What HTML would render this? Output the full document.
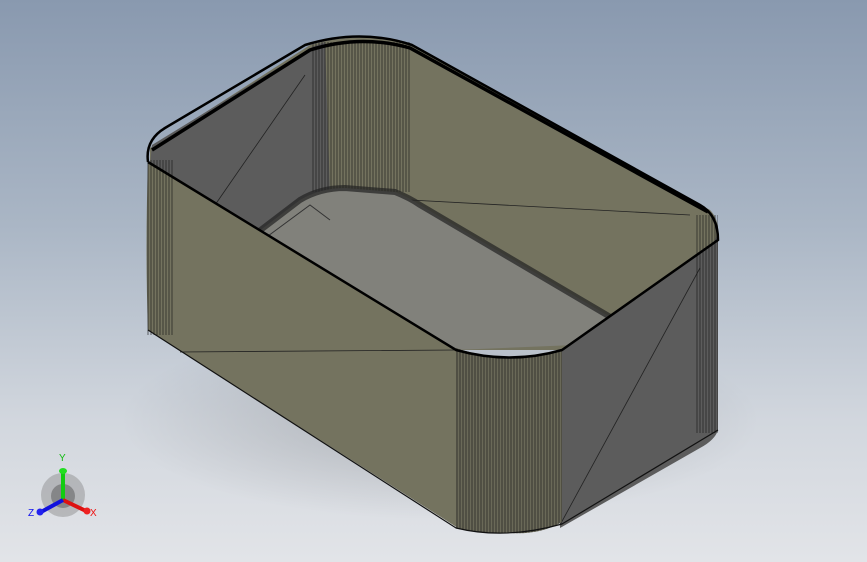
<!DOCTYPE html>
<html><head><style>
html,body{margin:0;padding:0;width:867px;height:562px;overflow:hidden}
body{background:linear-gradient(180deg,#8999af 0%,#aab6c5 40%,#d2d7de 75%,#e2e4e8 100%)}
svg{position:absolute;left:0;top:0}
</style></head><body>
<svg width="867" height="562" viewBox="0 0 867 562">
<defs>
<pattern id="vl" width="3" height="10" patternUnits="userSpaceOnUse">
<line x1="1" y1="0" x2="1" y2="10" stroke="#111" stroke-width="0.8" opacity="0.75"/>
</pattern>
<radialGradient id="sh" cx="0.5" cy="0.5" r="0.5"><stop offset="0" stop-color="#000" stop-opacity="0.18"/><stop offset="1" stop-color="#000" stop-opacity="0"/></radialGradient>
</defs>
<ellipse cx="440" cy="420" rx="320" ry="100" fill="url(#sh)"/>
<path d="M150,148 L310,45 Q360,30 410,45 L710,210 Q720,220 718,240 L560,350 L460,350 L150,165 Z" fill="#74735f"/>
<path d="M152,145 L312,47 L325,42 L330,192 L300,205 L258,232 L150,165 Z" fill="#5c5c5c"/>
<line x1="215" y1="205" x2="305" y2="75" stroke="#222" stroke-width="0.8"/>
<rect x="312" y="42" width="98" height="150" fill="url(#vl)"/>
<line x1="410" y1="200" x2="690" y2="215" stroke="#222" stroke-width="0.8"/>
<path d="M258,232 L300,200 Q320,188 345,188 L395,192 Q410,198 420,205 L612,318 L575,345 L455,350 Z" fill="#81817b"/>
<path d="M258,232 L300,200 Q320,188 345,188 L395,192 Q410,198 420,205 L612,318" fill="none" stroke="#222" stroke-width="6" opacity="0.7"/>
<path d="M268,236 L310,205 L330,220" fill="none" stroke="#333" stroke-width="1"/>
<path d="M148,162 L458,350 L458,528 L148,330 Q145,250 148,162 Z" fill="#74735f"/>
<line x1="180" y1="352" x2="455" y2="350" stroke="#222" stroke-width="0.8"/>
<rect x="146" y="160" width="28" height="175" fill="url(#vl)"/>
<path d="M560,350 L700,254 Q718,242 718,230 L718,430 Q715,440 700,448 L560,528 Z" fill="#5c5c5c"/>
<line x1="560" y1="525" x2="700" y2="268" stroke="#222" stroke-width="0.8"/>
<rect x="696" y="215" width="22" height="218" fill="url(#vl)"/>
<path d="M456,348 Q505,365 562,350 L562,522 Q540,535 510,533 Q480,533 456,528 Z" fill="#6a6958"/>
<path d="M456,348 Q505,365 562,350 L562,522 Q540,535 510,533 Q480,533 456,528 Z" fill="url(#vl)"/>
<path d="M148,162 Q145,140 165,128 L305,45 Q360,28 412,45 L700,205 Q718,215 718,240 L562,350 Q510,365 456,350 L148,162" fill="none" stroke="#000" stroke-width="2.5"/>
<path d="M152,150 L310,50 Q360,34 410,48 L708,212" fill="none" stroke="#000" stroke-width="3.5"/>
<path d="M148,330 L456,528 Q505,540 562,524 L718,430" fill="none" stroke="#111" stroke-width="1.2"/>
<ellipse cx="63" cy="495" rx="22" ry="22" fill="#888" opacity="0.45"/>
<ellipse cx="63" cy="496" rx="12" ry="12" fill="#555" opacity="0.5"/>
<line x1="63" y1="500" x2="63" y2="472" stroke="#1c1" stroke-width="4"/>
<ellipse cx="63" cy="471" rx="4" ry="3" fill="#2d2"/>
<line x1="63" y1="500" x2="86" y2="511" stroke="#d11" stroke-width="4"/>
<circle cx="87" cy="511" r="3.5" fill="#e22"/>
<line x1="63" y1="500" x2="41" y2="512" stroke="#11d" stroke-width="4"/>
<circle cx="40" cy="512" r="3.5" fill="#22e"/>
<text x="59" y="461" font-family="Liberation Sans,sans-serif" font-size="10" fill="#1b1">Y</text>
<text x="90" y="516" font-family="Liberation Sans,sans-serif" font-size="10" fill="#e11">X</text>
<text x="28" y="516" font-family="Liberation Sans,sans-serif" font-size="10" fill="#11e">Z</text>
</svg>
</body></html>
